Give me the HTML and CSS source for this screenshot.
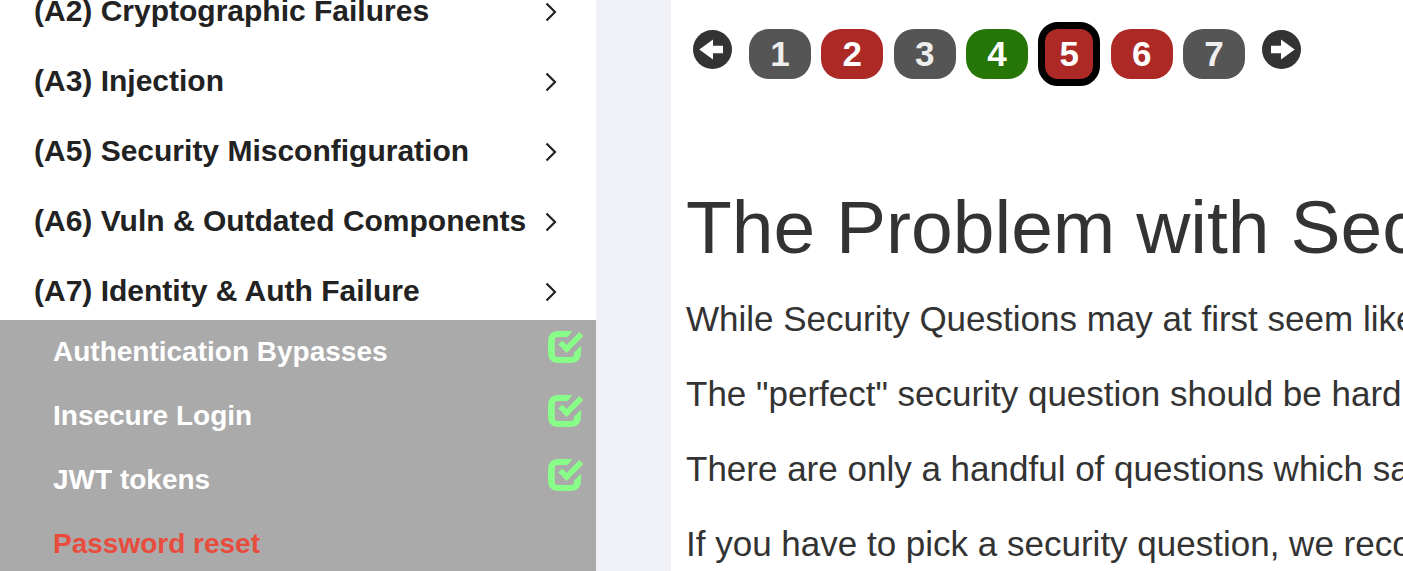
FILE: index.html
```html
<!DOCTYPE html>
<html lang="en">
<head>
<meta charset="utf-8">
<title>Password reset</title>
<link rel="stylesheet" href="styles.css">
</head>
<body>
<svg class="sprite" aria-hidden="true">
  <symbol id="chevron" viewBox="0 0 12 22"><path d="M1.500 4.500 10 13 1.500 21.500" transform="translate(0 -1)" fill="none" stroke="currentColor" stroke-width="2.200"/></symbol>
  <symbol id="check" viewBox="0 0 36 32"><path d="M11 0H24.500L19.500 6H10Q6.700 6 6.700 9V23Q6.700 26 10 26H23Q26 26 26 23V21.500L33 15V21Q33 32 22 32H11Q0 32 0 21V11Q0 0 11 0ZM10.300 13.300 14.300 9.700 18.700 14 31.300 1 35.300 5 18.700 22Z" fill="currentColor"/></symbol>
  <symbol id="arrow" viewBox="0 0 39 39"><circle cx="19.500" cy="19.500" r="19.500" fill="currentColor"/><path d="M6.300 19.500 20 9.500V15.700H30V23.200H20V29.500Z" fill="#fff"/></symbol>
</svg>
<div class="layout">
  <nav class="sidebar" aria-label="Lessons">
    <ul class="menu">
      <li><a class="category" href="#a2">(A2) Cryptographic Failures<svg class="chevron"><use href="#chevron"/></svg></a></li>
      <li><a class="category" href="#a3">(A3) Injection<svg class="chevron"><use href="#chevron"/></svg></a></li>
      <li><a class="category" href="#a5">(A5) Security Misconfiguration<svg class="chevron"><use href="#chevron"/></svg></a></li>
      <li><a class="category" href="#a6">(A6) Vuln &amp; Outdated Components<svg class="chevron"><use href="#chevron"/></svg></a></li>
      <li><a class="category" href="#a7">(A7) Identity &amp; Auth Failure<svg class="chevron"><use href="#chevron"/></svg></a>
        <ul class="lessons">
          <li><a class="lesson" href="#bypasses">Authentication Bypasses<svg class="check"><use href="#check"/></svg></a></li>
          <li><a class="lesson" href="#login">Insecure Login<svg class="check"><use href="#check"/></svg></a></li>
          <li><a class="lesson" href="#jwt">JWT tokens<svg class="check"><use href="#check"/></svg></a></li>
          <li><a class="lesson current" href="#reset">Password reset</a></li>
        </ul>
      </li>
    </ul>
  </nav>
  <main class="content">
    <nav class="pager" aria-label="Lesson pages">
      <button class="step" aria-label="Previous page"><svg><use href="#arrow"/></svg></button>
      <div class="pages">
        <a class="page" href="#p1">1</a>
        <a class="page todo" href="#p2">2</a>
        <a class="page" href="#p3">3</a>
        <a class="page done" href="#p4">4</a>
        <a class="page todo active" href="#p5" aria-current="page">5</a>
        <a class="page todo" href="#p6">6</a>
        <a class="page" href="#p7">7</a>
      </div>
      <button class="step" aria-label="Next page"><svg class="flip"><use href="#arrow"/></svg></button>
    </nav>
    <h1>The Problem with Security</h1>
    <p>While Security Questions may at first seem like</p>
    <p>The "perfect" security question should be hard</p>
    <p>There are only a handful of questions which satisfy</p>
    <p>If you have to pick a security question, we recommend</p>
  </main>
</div>
</body>
</html>
```
FILE: styles.css
```css
* { box-sizing: border-box; }
body {
  margin: 0;
  background: #f0f1f7;
  color: #333;
  font-family: "Liberation Sans", Arial, sans-serif;
}
.sprite { display: none; }
.layout {
  display: flex;
  gap: 75px;
  height: 100vh;
  overflow: hidden;
}
.sidebar {
  flex: 0 0 596px;
  background: #fff;
  font-weight: bold;
}
ul { margin: 0; padding: 0; list-style: none; }
/* The list is scrolled partway past its first entry. */
.menu { margin-top: -30px; }
a { text-decoration: none; }
.category {
  display: flex;
  align-items: center;
  justify-content: space-between;
  height: 70px;
  padding: 12px 39px 0 34px;
  color: #222;
  font-size: 30px;
  white-space: nowrap;
}
.chevron { width: 12px; height: 22px; }
.lessons { background: #aaa; }
.lesson {
  display: flex;
  justify-content: space-between;
  height: 64px;
  padding: 0 12px 0 53px;
  color: #fff;
  font-size: 28px;
  line-height: 64px;
}
.lesson.current { color: #e84c3d; }
.check {
  width: 36px;
  height: 32px;
  margin-top: 11px;
  color: #8f8;
}
.content {
  flex: 1;
  min-width: 0;
  padding: 22px 0 0 15px;
  background: #fff;
  overflow: hidden;
  white-space: nowrap;
}
.pager {
  display: flex;
  align-items: center;
  gap: 17px;
  height: 64px;
  padding-left: 7px;
}
.step {
  width: 39px;
  height: 39px;
  margin-bottom: 9px;
  padding: 0;
  border: 0;
  background: none;
  color: #333;
}
.step svg { display: block; width: 100%; height: 100%; }
.flip { transform: scaleX(-1); }
.pages {
  display: flex;
  align-items: center;
  justify-content: space-between;
  width: 496px;
}
.page {
  width: 62px;
  border-radius: 20px;
  background: #555;
  color: #eee;
  font-size: 35px;
  font-weight: bold;
  line-height: 50px;
  text-align: center;
}
.todo { background: #ac2925; color: #fff; }
.done { background: #267607; color: #fff; }
.active { border: 7px solid #000; }
h1 {
  margin: 100px 0 25px;
  font-size: 75px;
  font-weight: normal;
  line-height: 83px;
}
p { margin: 0 0 25px; font-size: 35px; line-height: 50px; }
```
